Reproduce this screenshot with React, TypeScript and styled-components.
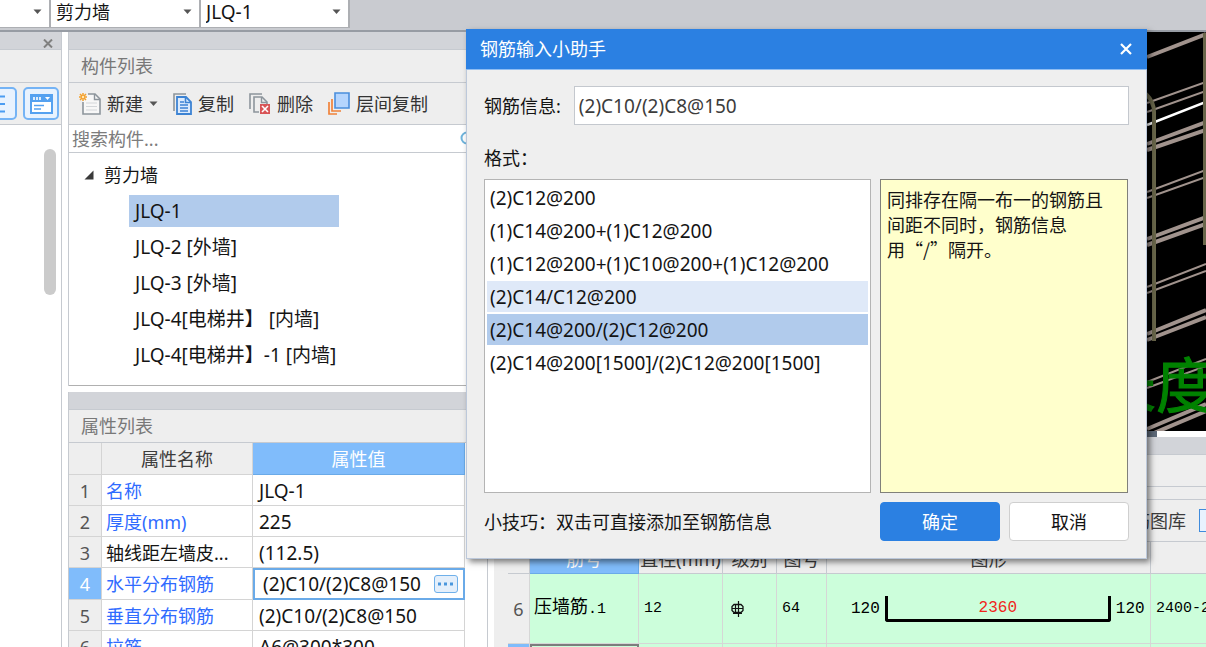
import React from "react";
import styled, { createGlobalStyle, css } from "styled-components";

const sans = `"Noto Sans", "Noto Sans CJK SC", sans-serif`;
const cad = `"Liberation Mono", "Noto Sans CJK SC", monospace`;

const color = {
  chrome: "#c9cbd0",
  strip: "#d2d4d9",
  panel: "#eeeeee",
  line: "#c6cad0",
  cellLine: "#d4d4d4",
  blue: "#2b80e2",
  head: "#80bcfb",
  focus: "#6aaae8",
  select: "#b1cbec",
  hover: "#dfe9f8",
  link: "#2f6bff",
  green: "#ccfedb",
};

const GlobalStyle = createGlobalStyle`
  * { box-sizing: border-box; }
  html, body { margin: 0; background: #fff; }
  body { overflow: hidden; font: 18px/24px ${sans}; color: #141414; }
  button, input, select { font: inherit; color: inherit; margin: 0; }
  button { border: 0; background: none; padding: 0; cursor: default; }
`;

const Shell = styled.div`
  position: relative;
  display: flex;
  flex-direction: column;
  height: 100vh;
  overflow: hidden;
`;

/* ---------- top bar ---------- */

const TopBar = styled.header`
  display: flex;
  align-items: flex-start;
  flex: none;
  height: 32px;
  background: ${color.chrome};
  border-bottom: 2px solid #979ca4;
`;

const Combo = styled.label<{ $w: number; $latin?: boolean }>`
  display: flex;
  align-items: center;
  width: ${(p) => p.$w}px;
  height: 28px;
  padding: 0 7px 4px 0;
  font-size: ${(p) => (p.$latin ? 19 : 18)}px;
  background: #fff;
  border-right: 2px solid #adafb3;
  border-bottom: 1px solid #adafb3;

  select {
    appearance: none;
    flex: 1;
    min-width: 0;
    height: 24px;
    line-height: 24px;
    border: 0;
    padding: 0 0 0 5px;
    background: transparent;
  }
`;

const Arrow = () => (
  <svg width="9" height="6" viewBox="0 0 9 6" aria-hidden="true">
    <path d="M0.5 0.5h8L4.5 5z" fill="#555" />
  </svg>
);

/* ---------- panels ---------- */

const Main = styled.main`
  display: flex;
  flex: 1;
  min-height: 0;
`;

const SidePanel = styled.aside`
  display: flex;
  flex-direction: column;
  flex: none;
  width: 62px;
  border-right: 1px solid ${color.line};
`;

const Strip = styled.div`
  display: flex;
  align-items: center;
  justify-content: flex-end;
  flex: none;
  height: 18px;
  padding-right: 8px;
  background: ${color.strip};
  border-bottom: 1px solid ${color.line};
`;

const Title = styled.h2`
  flex: none;
  margin: 0;
  height: 33px;
  padding: 4px 12px;
  font-size: 18px;
  font-weight: 400;
  line-height: 24px;
  color: #787878;
  background: ${color.panel};
  border-bottom: 1px solid ${color.line};
`;

const ToolRow = styled.div`
  display: flex;
  align-items: center;
  flex: none;
  height: 42px;
  background: ${color.panel};
  border-bottom: 1px solid ${color.line};
`;

const ViewRow = styled(ToolRow)`
  gap: 6px;
  justify-content: flex-end;
  padding-right: 2px;
`;

const ViewButton = styled.button`
  display: flex;
  align-items: center;
  justify-content: center;
  flex: none;
  width: 36px;
  height: 33px;
  border: 2px solid #74b3f5;
  border-radius: 5px;
  background: #e8f2fe;
`;

const ScrollTrack = styled.div`
  display: flex;
  justify-content: flex-end;
  padding: 24px 5px 0 0;
`;

const ScrollThumb = styled.div`
  width: 12px;
  height: 146px;
  border-radius: 6px;
  background: #cbcbcb;
`;

const Middle = styled.div`
  display: flex;
  flex-direction: column;
  flex: none;
  gap: 6px;
  width: 420px;
  margin-left: 6px;
  border-right: 1px solid ${color.line};
`;

const Panel = styled.section`
  display: flex;
  flex-direction: column;
  flex: none;
  border-left: 1px solid ${color.line};
`;

const ToolButton = styled.button`
  display: flex;
  align-items: center;
  height: 30px;
  gap: 6px;
  color: #333;
`;

const Tools = styled(ToolRow)`
  padding: 0 8px 0 10px;
  gap: 15px;
`;

const Search = styled.label`
  display: flex;
  align-items: center;
  height: 28px;
  padding: 0 11px 0 3px;
  border-bottom: 1px solid ${color.line};

  input {
    flex: 1;
    min-width: 0;
    border: 0;
    padding: 0;
    outline: 0;
    background: transparent;
  }
  input::placeholder { color: #7c7c7c; opacity: 1; }
`;

const Tree = styled.ul`
  list-style: none;
  margin: 0;
  padding: 4px 0 11px;
  height: 233px;
  border-bottom: 1px solid #b0b0b0;

  ul { list-style: none; margin: 0; padding: 0 0 0 60px; }
`;

const TreeHead = styled.div`
  display: flex;
  align-items: center;
  gap: 10px;
  height: 36px;
  padding-left: 15px;
`;

const TreeItem = styled.li<{ $on?: boolean }>`
  width: 210px;
  height: 32px;
  margin: 2px 0 4px;
  padding: 4px 6px;
  font-size: 19px;
  white-space: pre;
  background: ${(p) => (p.$on ? color.select : "transparent")};
`;

/* ---------- property grid ---------- */

const PropTable = styled.table`
  width: 396px;
  border-collapse: separate;
  border-spacing: 0;
  table-layout: fixed;

  th, td {
    height: 31px;
    padding: 1px 6px 0;
    text-align: left;
    font-weight: 400;
    white-space: nowrap;
    border-right: 1px solid ${color.cellLine};
    border-bottom: 1px solid ${color.cellLine};
  }
  thead th { height: 32px; padding: 0; text-align: center; color: #3c3c3c; background: ${color.panel}; }
`;

const IndexCell = styled.th<{ $on?: boolean }>`
  && {
    padding: 1px 0 0;
    text-align: center;
    color: ${(p) => (p.$on ? "#fff" : "#555")};
    background: ${(p) => (p.$on ? color.head : color.panel)};
  }
`;

const ActiveHead = styled.th`
  &&& { color: #fff; background: ${color.head}; border-color: ${color.focus}; }
`;

const NameCell = styled.td<{ $plain?: boolean }>`
  && { padding-left: 4px; }
  color: ${(p) => (p.$plain ? "#141414" : color.link)};
`;

const ValueCell = styled.td<{ $edit?: boolean }>`
  ${(p) =>
    p.$edit
      ? css`&& { height: 32px; padding: 0; border: 2px solid ${color.focus}; }`
      : css`font-size: 19px;`}
`;

const Editor = styled.div`
  display: flex;
  align-items: center;
  gap: 10px;
  height: 28px;
  padding: 0 5px 0 8px;

  input {
    flex: 1;
    min-width: 0;
    height: 24px;
    padding: 0;
    border: 0;
    outline: 0;
    font-size: 19px;
  }
`;

const MoreButton = styled.button`
  display: flex;
  align-items: center;
  justify-content: center;
  width: 24px;
  height: 18px;
  border: 1px solid #6fb0ea;
  border-radius: 3px;
  background: #e4effb;
`;

/* ---------- right side ---------- */

const Right = styled.div`
  display: flex;
  flex-direction: column;
  flex: 1;
  min-width: 0;
  margin-left: 6px;
  background: ${color.panel};
  overflow: hidden;
`;

const Canvas = styled.svg`
  display: block;
  flex: none;
  width: 100%;
  height: 399px;
  background: #000;
`;

const CanvasScroll = styled.div`
  flex: none;
  height: 6px;
  background: #fff;
  padding-right: 49px;

  div { height: 6px; background: #5d6978; }
`;

const DockTabs = styled.div`
  flex: none;
  height: 32px;
  border-bottom: 1px solid ${color.line};
`;

const DockGap = styled.div`
  flex: none;
  height: 13px;
  border-bottom: 1px solid ${color.line};
`;

const DockTools = styled.div`
  display: flex;
  align-items: center;
  justify-content: flex-end;
  flex: none;
  gap: 13px;
  height: 42px;
  margin-right: -15px;
  color: #3c3c3c;
  border-bottom: 1px solid ${color.line};
`;

const LibraryBox = styled.span`
  width: 22px;
  height: 23px;
  border: 1px solid #3f8bdc;
  background: #e8f2fe;
`;

const BarTable = styled.table`
  flex: none;
  width: calc(100% + 40px);
  padding-left: 14px;
  border-collapse: separate;
  border-spacing: 0;
  table-layout: fixed;

  th, td {
    padding: 0 5px;
    text-align: left;
    font-weight: 400;
    white-space: nowrap;
    border-right: 1px solid #d6d6d6;
    border-bottom: 1px solid #d6d6d6;
  }
  thead th {
    height: 32px;
    padding: 2px 0 0;
    text-align: center;
    color: #3c3c3c;
    background: ${color.panel};
    border-color: ${color.line};
  }
  tbody td { height: 70px; font: 15px/24px ${cad}; color: #000; background: ${color.green}; }
  svg { display: block; margin-left: 2px; }
`;

const BarName = styled.td<{ $focus?: boolean }>`
  && { font-size: 18px; padding-left: 4px; ${(p) => p.$focus && "border: 2px solid #7d7d7d;"} }
  span { font-size: 15px; }
`;

const Shape = styled.div`
  display: flex;
  align-items: center;
  gap: 5px;
  padding-left: 19px;
  font-size: 16px;
`;

const Bracket = styled.div`
  width: 226px;
  height: 26px;
  text-align: center;
  color: #f0261c;
  border: 3px solid #000;
  border-top: 0;
  border-radius: 0 0 3px 3px;
`;

/* ---------- dialog ---------- */

const Dialog = styled.section`
  position: absolute;
  top: 29px;
  left: 466px;
  right: 59px;
  background: #efefef;
  border: 1px solid #bcc8da;
  border-top: 0;
  box-shadow: 3px 3px 6px rgba(0, 0, 0, 0.5);
`;

const DialogHead = styled.header`
  display: flex;
  align-items: center;
  justify-content: space-between;
  height: 41px;
  margin: 0 -1px;
  padding: 0 15px 0 14px;
  color: #fff;
  background: ${color.blue};
  border-bottom: 1px solid #8fbdf2;

  h1 { margin: 0; font-size: 18px; font-weight: 400; }
  button { display: flex; }
`;

const DialogBody = styled.div`
  padding: 16px 17px 17px;
`;

const InfoField = styled.label`
  display: flex;
  align-items: center;
  justify-content: space-between;
  gap: 13px;

  input {
    flex: 1;
    min-width: 0;
    height: 39px;
    padding: 0 4px;
    font-size: 19px;
    color: #3c3c3c;
    background: #fff;
    border: 1px solid #c4c8ce;
    outline: 0;
  }
`;

const FormatLabel = styled.div`
  padding: 21px 0 9px;
`;

const Split = styled.div`
  display: grid;
  grid-template-columns: 1fr 248px;
  column-gap: 9px;
  height: 314px;
  padding-right: 1px;
`;

const List = styled.ul`
  list-style: none;
  margin: 0;
  padding: 2px;
  background: #fff;
  border: 1px solid #b4b4b4;
`;

const Option = styled.li<{ $bg?: string }>`
  height: 31px;
  margin-bottom: 2px;
  padding: 4px 3px;
  font-size: 19px;
  line-height: 24px;
  background: ${(p) => p.$bg ?? "transparent"};
`;

const Note = styled.p`
  margin: 0;
  padding: 7px 18px 7px 6px;
  font-family: "Noto Sans CJK SC", sans-serif;
  line-height: 25px;
  background: #ffffcc;
  border: 1px solid #80807a;
`;

const DialogFoot = styled.footer`
  display: flex;
  align-items: center;
  gap: 9px;
  margin-top: 9px;

  p { flex: 1; margin: 0; }
`;

const DialogButton = styled.button<{ $primary?: boolean }>`
  width: 120px;
  height: 39px;
  border-radius: 4px;
  border: 1px solid ${(p) => (p.$primary ? color.blue : "#cfcfcf")};
  color: ${(p) => (p.$primary ? "#fff" : "#111")};
  background: ${(p) => (p.$primary ? color.blue : "#fff")};
`;

/* ---------- icons ---------- */

const NewIcon = () => (
  <svg width="22" height="22" viewBox="0 0 22 22" fill="none" aria-hidden="true">
    <path d="M4 9v12h17V6l-5-5H9" fill="#f7f7f7" />
    <path d="M9 1h7l5 5v15H4V9" stroke="#8d959c" strokeWidth="1.6" />
    <path d="M15.500 1v5.500H21" stroke="#8d959c" strokeWidth="1.4" />
    <path d="M7 10h11M7 13.500h11M7 17h11" stroke="#d3d6d9" />
    <path d="M4 0v8M0 4h8M1 1l6 6M7 1l-6 6" stroke="#f5a02b" strokeWidth="1.5" />
    <circle cx="4" cy="4" r="1.2" fill="#ffe9b8" />
  </svg>
);

const CopyIcon = () => (
  <svg width="19" height="22" viewBox="0 0 19 22" fill="none" aria-hidden="true">
    <path d="M1 18V1h12" stroke="#8d959c" strokeWidth="1.6" />
    <path d="M4 4h9l5 5v12H4z" fill="#dcebfd" stroke="#3c83d3" strokeWidth="1.8" />
    <path d="M12.500 4v5.500H18" stroke="#3c83d3" strokeWidth="1.6" />
    <path d="M7 9h4M7 12h8M7 15h8M7 18h8" stroke="#3c83d3" strokeWidth="1.4" />
  </svg>
);

const DeleteIcon = () => (
  <svg width="22" height="22" viewBox="0 0 22 22" fill="none" aria-hidden="true">
    <path d="M1 16V1h12" stroke="#8d959c" strokeWidth="1.6" />
    <path d="M10 19H5V4h8l5 5v2" stroke="#8d959c" strokeWidth="1.6" />
    <path d="M12.500 4v5.500H18" stroke="#8d959c" strokeWidth="1.4" />
    <path d="M11 11h10v10H11z" fill="#d85456" />
    <path d="M13 13l6 6M19 13l-6 6" stroke="#fff" strokeWidth="1.6" />
  </svg>
);

const LayerIcon = () => (
  <svg width="22" height="23" viewBox="0 0 22 23" fill="none" aria-hidden="true">
    <path d="M1 10v12h8M4 7v12h9" stroke="#f0823a" strokeWidth="1.7" />
    <path d="M7 1h14v15H7z" fill="#b5d5fd" stroke="#4a8edc" strokeWidth="1.6" />
  </svg>
);

const WindowIcon = () => (
  <svg width="23" height="20" viewBox="0 0 23 20" aria-hidden="true">
    <path d="M1 1h21v18H1z" fill="#fff" stroke="#55a1f0" strokeWidth="2" />
    <path d="M1 1h21v7H1z" fill="#55a1f0" />
    <path d="M4 3v3M7 3v3M10 3v3" stroke="#fff" strokeWidth="1.6" />
    <path d="M15 3h5l-2.500 3z" fill="#fff" />
    <path d="M4 11.500h10M4 15h7" stroke="#55a1f0" strokeWidth="1.6" />
  </svg>
);

const ListIcon = () => (
  <svg width="22" height="20" viewBox="0 0 22 20" aria-hidden="true">
    <path d="M1 2.500h16M1 10h16M1 17.500h16" stroke="#4a9cf2" strokeWidth="2" />
  </svg>
);

const SearchIcon = () => (
  <svg width="16" height="16" viewBox="0 0 16 16" fill="none" aria-hidden="true">
    <circle cx="7" cy="7" r="5.500" stroke="#6fb4dc" strokeWidth="2" />
    <path d="M11 11l4 4" stroke="#6fb4dc" strokeWidth="2" />
  </svg>
);

/* HRB400 steel grade mark */
const GradeIcon = () => (
  <svg width="15" height="16" viewBox="0 0 15 16" fill="none" aria-label="HRB400">
    <path d="M4 3.500h7l2 2v4l-2 2H4l-2-2v-4z" stroke="#111" strokeWidth="1.3" />
    <path d="M5.500 3v9M8.500 0v16M2 7.500h11M3 12.500h9" stroke="#111" strokeWidth="1.2" />
  </svg>
);

const rails: [number, number, number][] = [
  [57, 34, 4], [103, 82, 2], [112, 91, 2],
  [144, 122, 4], [150, 130, 4], [192, 170, 2], [198, 177, 2],
  [239, 217, 4], [245, 224, 4], [287, 264, 2], [293, 271, 2],
  [334, 310, 4], [340, 317, 4], [382, 359, 2], [388, 366, 2],
  [429, 404, 4], [436, 411, 4],
];

const Scene = () => (
  <Canvas viewBox="494 32 712 399" preserveAspectRatio="xMaxYMin slice" aria-label="三维视图">
    {rails.map(([a, b, w]) => (
      <path key={a} d={`M1147 ${a}L1206 ${b}`} stroke="#a1938d" strokeWidth={w} />
    ))}
    <path d="M1147 125L1206 102" stroke="#fff" strokeWidth="2.500" />
    <path d="M1146 94q8 8 8 18v229M1205 33v212" fill="none" stroke="#69664a" strokeWidth="4" />
    <text
      x="1096"
      y="408"
      fontSize="60"
      fill="#008200"
      stroke="#008200"
      fontFamily="Noto Sans CJK SC"
    >
      长度
    </text>
  </Canvas>
);

/* ---------- data ---------- */

const walls = ["JLQ-1", "JLQ-2 [外墙]", "JLQ-3 [外墙]", "JLQ-4[电梯井】 [内墙]", "JLQ-4[电梯井】-1 [内墙]"];

const props = [
  { name: "名称", value: "JLQ-1" },
  { name: "厚度(mm)", value: "225" },
  { name: "轴线距左墙皮...", value: "(112.5)", plain: true },
  { name: "水平分布钢筋", value: "(2)C10/(2)C8@150", edit: true },
  { name: "垂直分布钢筋", value: "(2)C10/(2)C8@150" },
  { name: "拉筋", value: "A6@300*300" },
];

const formats: { text: string; bg?: string }[] = [
  { text: "(2)C12@200" },
  { text: "(1)C14@200+(1)C12@200" },
  { text: "(1)C12@200+(1)C10@200+(1)C12@200" },
  { text: "(2)C14/C12@200", bg: color.hover },
  { text: "(2)C14@200/(2)C12@200", bg: color.select },
  { text: "(2)C14@200[1500]/(2)C12@200[1500]" },
];

export default function App() {
  return (
    <Shell lang="zh-CN">
      <GlobalStyle />
      <TopBar>
        <Combo $w={51}>
          <select aria-label="楼层"><option></option></select>
          <Arrow />
        </Combo>
        <Combo $w={150}>
          <select aria-label="构件类型"><option>剪力墙</option></select>
          <Arrow />
        </Combo>
        <Combo $w={149} $latin>
          <select aria-label="构件"><option>JLQ-1</option></select>
          <Arrow />
        </Combo>
      </TopBar>

      <Main>
        <SidePanel>
          <Strip>
            <button aria-label="关闭面板">
              <svg width="10" height="9" viewBox="0 0 10 9">
                <path d="M1 0.500l8 8M9 0.500l-8 8" stroke="#808080" strokeWidth="2" />
              </svg>
            </button>
          </Strip>
          <Title />
          <ViewRow>
            <ViewButton aria-label="列表"><ListIcon /></ViewButton>
            <ViewButton aria-label="窗口"><WindowIcon /></ViewButton>
          </ViewRow>
          <ScrollTrack><ScrollThumb /></ScrollTrack>
        </SidePanel>

        <Middle>
          <Panel>
            <Strip />
            <Title>构件列表</Title>
            <Tools>
              <ToolButton><NewIcon />新建<Arrow /></ToolButton>
              <ToolButton><CopyIcon />复制</ToolButton>
              <ToolButton><DeleteIcon />删除</ToolButton>
              <ToolButton><LayerIcon />层间复制</ToolButton>
            </Tools>
            <Search>
              <input placeholder="搜索构件..." aria-label="搜索构件" />
              <SearchIcon />
            </Search>
            <Tree>
              <li>
                <TreeHead>
                  <svg width="10" height="10" viewBox="0 0 10 10" aria-hidden="true">
                    <path d="M9.500 0.500v9H0.500z" fill="#3a3a3a" />
                  </svg>
                  剪力墙
                </TreeHead>
                <ul>
                  {walls.map((w, i) => (
                    <TreeItem key={w} $on={i === 0}>{w}</TreeItem>
                  ))}
                </ul>
              </li>
            </Tree>
          </Panel>

          <Panel>
            <Strip />
            <Title>属性列表</Title>
            <PropTable>
              <colgroup>
                <col style={{ width: 33 }} />
                <col style={{ width: 151 }} />
                <col />
              </colgroup>
              <thead>
                <tr><th></th><th>属性名称</th><ActiveHead>属性值</ActiveHead></tr>
              </thead>
              <tbody>
                {props.map((p, i) => (
                  <tr key={p.name}>
                    <IndexCell $on={p.edit}>{i + 1}</IndexCell>
                    <NameCell $plain={p.plain}>{p.name}</NameCell>
                    <ValueCell $edit={p.edit}>
                      {p.edit ? (
                        <Editor>
                          <input defaultValue={p.value} aria-label={p.name} />
                          <MoreButton aria-label="更多">
                            <svg width="16" height="4" viewBox="0 0 16 4">
                              <path d="M0 0.500h3v3H0zM6 0.500h3v3H6zM12 0.500h3v3h-3z" fill="#4a97dd" />
                            </svg>
                          </MoreButton>
                        </Editor>
                      ) : (
                        p.value
                      )}
                    </ValueCell>
                  </tr>
                ))}
              </tbody>
            </PropTable>
          </Panel>
        </Middle>

        <Right>
          <Scene />
          <CanvasScroll><div /></CanvasScroll>
          <Strip />
          <DockTabs />
          <DockGap />
          <DockTools>
            <span>钢筋图库</span>
            <LibraryBox />
          </DockTools>
          <BarTable>
            <colgroup>
              <col style={{ width: 22 }} />
              <col style={{ width: 109 }} />
              <col style={{ width: 84 }} />
              <col style={{ width: 54 }} />
              <col style={{ width: 50 }} />
              <col style={{ width: 324 }} />
              <col />
            </colgroup>
            <thead>
              <tr>
                <th></th>
                <ActiveHead>筋号</ActiveHead>
                <th>直径(mm)</th>
                <th>级别</th>
                <th>图号</th>
                <th>图形</th>
                <th></th>
              </tr>
            </thead>
            <tbody>
              <tr>
                <IndexCell>6</IndexCell>
                <BarName>压墙筋<span>.1</span></BarName>
                <td>12</td>
                <td><GradeIcon /></td>
                <td>64</td>
                <td>
                  <Shape>
                    <span>120</span>
                    <Bracket>2360</Bracket>
                    <span>120</span>
                  </Shape>
                </td>
                <td>2400-2</td>
              </tr>
              <tr>
                <IndexCell $on></IndexCell>
                <BarName $focus></BarName>
                <td></td><td></td><td></td><td></td><td></td>
              </tr>
            </tbody>
          </BarTable>
        </Right>
      </Main>

      <Dialog role="dialog" aria-labelledby="dialog-title">
        <DialogHead>
          <h1 id="dialog-title">钢筋输入小助手</h1>
          <button aria-label="关闭">
            <svg width="12" height="12" viewBox="0 0 12 12">
              <path d="M1 1l10 10M11 1L1 11" stroke="#fff" strokeWidth="2.200" />
            </svg>
          </button>
        </DialogHead>
        <DialogBody>
          <InfoField>
            钢筋信息:
            <input defaultValue="(2)C10/(2)C8@150" />
          </InfoField>
          <FormatLabel id="format-label">格式：</FormatLabel>
          <Split>
            <List role="listbox" aria-labelledby="format-label">
              {formats.map((f) => (
                <Option key={f.text} role="option" aria-selected={f.bg === color.select} $bg={f.bg}>
                  {f.text}
                </Option>
              ))}
            </List>
            <Note>
              同排存在隔一布一的钢筋且间距不同时，钢筋信息<br />用“/”隔开。
            </Note>
          </Split>
          <DialogFoot>
            <p>小技巧：双击可直接添加至钢筋信息</p>
            <DialogButton $primary>确定</DialogButton>
            <DialogButton>取消</DialogButton>
          </DialogFoot>
        </DialogBody>
      </Dialog>
    </Shell>
  );
}
